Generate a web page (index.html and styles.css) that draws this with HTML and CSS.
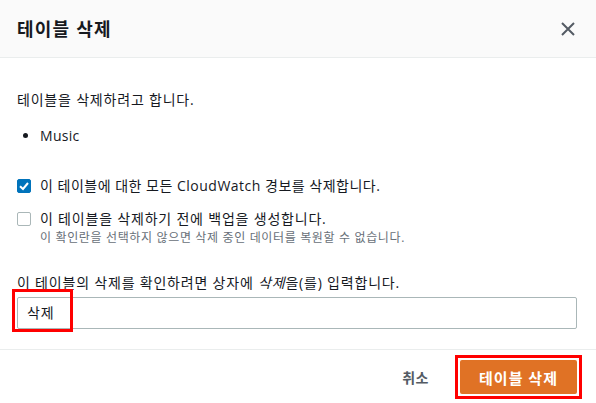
FILE: index.html
```html
<!DOCTYPE html>
<html lang="ko">
<head>
<meta charset="utf-8">
<title>테이블 삭제</title>
<link rel="stylesheet" href="styles.css">
</head>
<body>
<div class="modal">
  <header class="modal-header">
    <h2 class="modal-title">테이블 삭제</h2>
    <button class="close-btn" aria-label="닫기">
      <svg width="16" height="16" viewBox="0 0 16 16"><path d="M2 2 L14 14 M14 2 L2 14" stroke="#545b64" stroke-width="2" fill="none"/></svg>
    </button>
  </header>
  <div class="modal-body">
    <p class="intro">테이블을 삭제하려고 합니다.</p>
    <ul class="table-list"><li>Music</li></ul>
    <label class="check-row first">
      <span class="box checked">
        <svg width="14" height="14" viewBox="0 0 14 14"><path d="M3 7.2 L6 10 L11 4" stroke="#fff" stroke-width="2" fill="none"/></svg>
      </span>
      <span class="check-text">이 테이블에 대한 모든 CloudWatch 경보를 삭제합니다.</span>
    </label>
    <label class="check-row second">
      <span class="box"></span>
      <span class="check-text">이 테이블을 삭제하기 전에 백업을 생성합니다.
        <span class="desc">이 확인란을 선택하지 않으면 삭제 중인 데이터를 복원할 수 없습니다.</span>
      </span>
    </label>
    <p class="confirm-label">이 테이블의 삭제를 확인하려면 상자에 <em>삭제</em>을(를) 입력합니다.</p>
    <div class="input-wrap">
      <div class="text-input">삭제</div>
      <span class="mark mark-input"></span>
    </div>
  </div>
  <footer class="modal-footer">
    <button class="btn-cancel">취소</button>
    <span class="btn-mark"><button class="btn-primary">테이블 삭제</button></span>
  </footer>
</div>
</body>
</html>
```

FILE: styles.css
```css
* { box-sizing: border-box; }
body {
  margin: 0;
  background: #fff;
  font-family: "Open Sans", "Noto Sans CJK KR", sans-serif;
  font-size: 14px;
  letter-spacing: 0.8px;
  color: #16191f;
}
.modal { width: 596px; }
.modal-header {
  height: 58px;
  background: #fafafa;
  border-bottom: 1px solid #eaeded;
  display: flex;
  align-items: center;
  justify-content: space-between;
  padding: 0 20px 0 17px;
}
.modal-title {
  margin: 0;
  font-size: 18px;
  font-weight: 700;
  line-height: 22px;
  letter-spacing: 1.2px;
}
.close-btn {
  border: 0;
  background: none;
  padding: 0;
  width: 16px;
  height: 16px;
  display: flex;
}
.modal-body {
  padding: 0 19px 0 17px;
}
.intro {
  margin: 32px 0 0;
  line-height: 20px;
}
.table-list {
  margin: 16px 0 0;
  padding-left: 23px;
  line-height: 20px;
  letter-spacing: 0.3px;
}
.check-row {
  display: flex;
  gap: 9px;
  line-height: 20px;
}
.check-row.first { margin-top: 30px; letter-spacing: 0.5px; }
.check-row.second { margin-top: 13px; }
.box {
  flex: none;
  width: 14px;
  height: 14px;
  margin-top: 3px;
  border: 1px solid #aab7b8;
  border-radius: 2px;
  background: #fff;
  display: flex;
}
.box.checked {
  background: #0073bb;
  border-color: #0073bb;
}
.box.checked svg { margin: -1px; }
.check-text { display: flex; flex-direction: column; }
.desc {
  font-size: 12px;
  line-height: 18px;
  color: #687078;
  letter-spacing: 0.65px;
}
.confirm-label {
  margin: 26px 0 0;
  line-height: 20px;
}
.confirm-label em { font-style: italic; }
.input-wrap {
  position: relative;
  margin-top: 4px;
}
.text-input {
  height: 32px;
  border: 1px solid #aab7b8;
  border-radius: 2px;
  padding: 0 9px;
  line-height: 30px;
}
.mark {
  position: absolute;
  border: 3px solid #ff0000;
  pointer-events: none;
}
.mark-input {
  left: -5px;
  top: -8px;
  width: 61px;
  height: 43px;
}
.modal-footer {
  margin-top: 20px;
  border-top: 1px solid #eaeded;
  display: flex;
  justify-content: flex-end;
  align-items: center;
  padding: 5px 14px 0 0;
}
.btn-cancel {
  border: 0;
  background: none;
  font: inherit;
  font-weight: 700;
  letter-spacing: 0.5px;
  color: #545b64;
  padding: 0;
  margin-right: 26px;
}
.btn-mark {
  display: flex;
  border: 3px solid #ff0000;
  padding: 2px;
}
.btn-primary {
  font: inherit;
  font-size: 15px;
  font-weight: 700;
  letter-spacing: 1px;
  color: #fff;
  background: #e07225;
  border: 0;
  border-radius: 2px;
  width: 117px;
  height: 34px;
}
```
